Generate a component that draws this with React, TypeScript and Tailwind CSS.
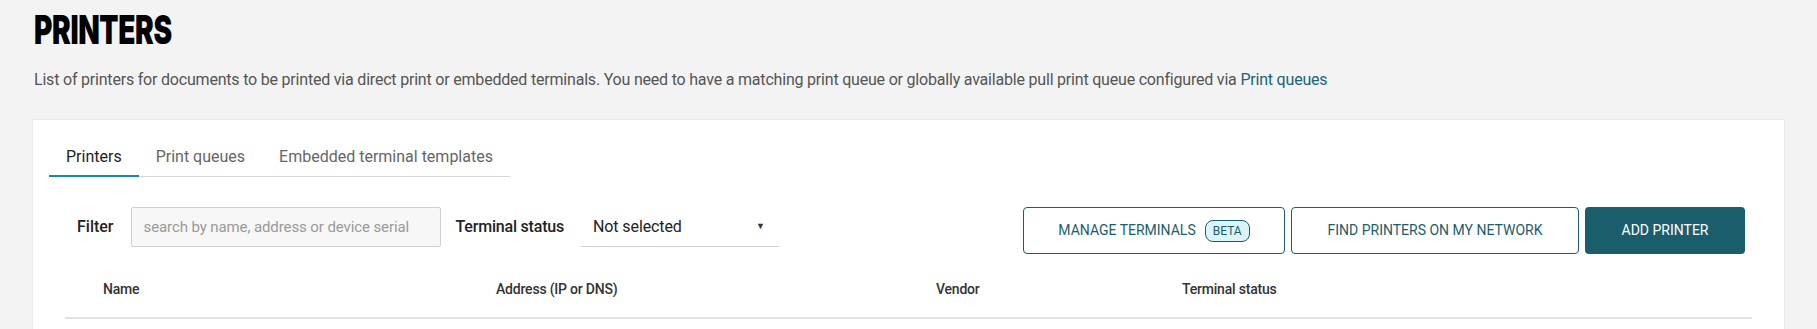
const font = "font-['Roboto','Liberation_Sans',sans-serif]";

const tabs = ["Printers", "Print queues", "Embedded terminal templates"];

const columns = ["Name", "Address (IP or DNS)", "Vendor", "Terminal status"];

export default function App() {
  return (
    <div className={`min-h-screen bg-[#f3f3f3] ${font}`}>
      <header className="px-[34px] pt-[8px]">
        <h1 className="origin-left scale-x-[0.7] font-['Inter',sans-serif] text-[40px] font-black leading-[44px] tracking-[-0.5px] text-black">
          PRINTERS
        </h1>
        <p className="mt-[17px] text-[16px] leading-[22px] tracking-[-0.2px] text-[#555]">
          List of printers for documents to be printed via direct print or embedded terminals. You need to have a
          matching print queue or globally available pull print queue configured via{" "}
          <a href="#" className="text-[#1a6478]">
            Print queues
          </a>
        </p>
      </header>

      <section className="mx-[32px] mt-[28px] border border-[#ebebeb] bg-white">
        {/* tabs */}
        <div className="px-[16px] pt-[16px]">
          <div className="inline-flex border-b border-[#d6d6d6]">
            {tabs.map((tab, i) => (
              <button
                key={tab}
                className={`-mb-px px-[17px] pb-[8px] pt-[10px] text-[16px] leading-[21px] tracking-[0px] ${
                  i === 0
                    ? "border-b-2 border-[#1b8aa3] text-[#222]"
                    : "border-b-2 border-transparent text-[#666]"
                }`}
              >
                {tab}
              </button>
            ))}
          </div>
        </div>

        {/* filters + actions */}
        <div className="mt-[30px] flex items-start pl-[44px] pr-[39px]">
          <div className="flex items-center">
            <label className="text-[16px] font-medium text-[#222]">Filter</label>
            <input
              placeholder="search by name, address or device serial"
              className="ml-[17px] h-[40px] w-[310px] rounded-[2px] border border-[#cfcfcf] bg-[#f7f7f7] px-[12px] text-[15px] tracking-[-0.1px] text-[#333] outline-none placeholder:text-[#9a9a9a]"
            />
            <span className="ml-[15px] text-[16px] font-medium tracking-[-0.2px] text-[#222]">Terminal status</span>
            <div className="ml-[17px] flex h-[40px] w-[198px] items-center justify-between border-b border-[#cfcfcf] pl-[12px] pr-[14px]">
              <span className="text-[16px] tracking-[-0.1px] text-[#222]">Not selected</span>
              <span className="text-[9px] text-[#333]">▼</span>
            </div>
          </div>

          <div className="ml-auto flex gap-[6px]">
            <button className="flex h-[47px] w-[262px] items-center justify-center gap-[9px] rounded-[4px] border border-[#1a5e6c] text-[14px] tracking-[0px] text-[#1a5e6c]">
              MANAGE TERMINALS
              <span className="rounded-[8px] border border-[#1a5e6c] bg-[#dcf3f8] px-[7px] py-[2px] text-[12px] leading-[16px]">
                BETA
              </span>
            </button>
            <button className="flex h-[47px] w-[288px] items-center justify-center rounded-[4px] border border-[#1a5e6c] text-[14px] tracking-[0px] text-[#1a5e6c]">
              FIND PRINTERS ON MY NETWORK
            </button>
            <button className="flex h-[47px] w-[160px] items-center justify-center rounded-[4px] bg-[#1a5e6c] text-[14px] tracking-[0px] text-white">
              ADD PRINTER
            </button>
          </div>
        </div>

        {/* table header */}
        <div className="mx-[32px] mt-[25px] grid grid-cols-[393px_440px_246px_1fr] border-b-2 border-[#e2e2e2] pb-[18px] pl-[38px]">
          {columns.map((c) => (
            <span key={c} className="text-[14px] font-medium leading-[20px] tracking-[-0.2px] text-[#333]">
              {c}
            </span>
          ))}
        </div>
        <div className="h-[40px]" />
      </section>
    </div>
  );
}
